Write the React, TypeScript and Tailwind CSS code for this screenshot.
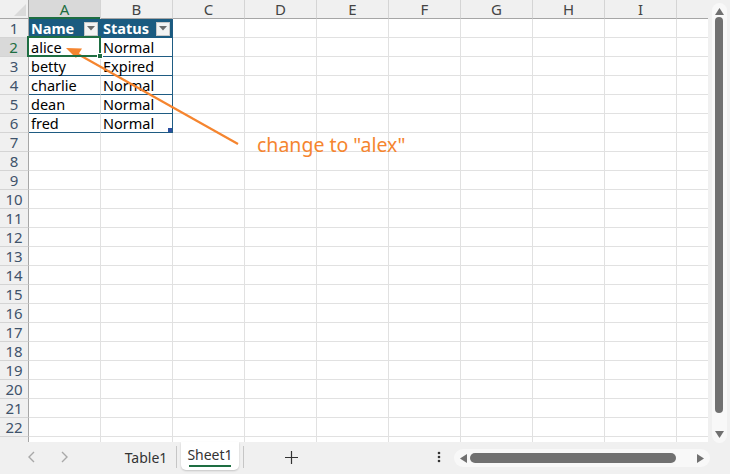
import React from "react";

const COLS = ["A", "B", "C", "D", "E", "F", "G", "H", "I", ""];
const DATA: Record<number, [string, string]> = {
  2: ["alice", "Normal"],
  3: ["betty", "Expired"],
  4: ["charlie", "Normal"],
  5: ["dean", "Normal"],
  6: ["fred", "Normal"],
};
const ROWS = Array.from({ length: 22 }, (_, i) => i + 1);

const FilterBtn = () => (
  <span className="ml-auto mr-[2px] flex h-[14px] w-[14px] items-center justify-center border border-[#c8c8c8] bg-[#f3f3f3]">
    <svg width="8" height="5" viewBox="0 0 8 5">
      <path d="M0 0 L8 0 L4 4.5 Z" fill="#6b6b6b" />
    </svg>
  </span>
);

const Cell = ({ row, col }: { row: number; col: number }) => {
  const isTableHead = row === 1 && col < 2;
  const inTable = row >= 2 && row <= 6 && col < 2;
  const val = DATA[row]?.[col];
  let cls = "relative flex h-[19px] items-center border-b border-r border-[#e1e1e1] bg-white pl-[2px] pt-[1px] text-[14.5px] text-black";
  if (isTableHead) {
    cls = "relative flex h-[19px] items-center border-b border-r border-[#1b5b80] bg-[#1b5b80] pl-[2px] pt-[1px] text-[14.5px] font-bold text-white";
  } else if (inTable) {
    cls =
      "relative flex h-[19px] items-center border-b border-r bg-white pl-[2px] pt-[1px] text-[14.5px] text-black " +
      (col === 1 ? "border-[#1f5c83]" : "border-b-[#1f5c83] border-r-[#e1e1e1]");
  }
  if (row === 1 && col === 1) cls += " border-r-[#1f5c83]";
  return (
    <div className={cls}>
      {isTableHead && (
        <>
          <span className="leading-none">{col === 0 ? "Name" : "Status"}</span>
          <FilterBtn />
        </>
      )}
      {val && <span className="leading-none">{val}</span>}
      {row === 6 && col === 1 && (
        <span className="absolute bottom-0 right-0 h-[4px] w-[4px] bg-[#2b4fa0]" />
      )}
      {row === 2 && col === 0 && (
        <>
          <span className="pointer-events-none absolute -left-[2px] -top-[2px] z-10 h-[21px] w-[74px] border-2 border-[#1e6e42]" />
          <span className="absolute -bottom-[3px] -right-[3px] z-20 h-[6px] w-[6px] border border-white bg-[#1e6e42]" />
        </>
      )}
    </div>
  );
};

export default function App() {
  return (
    <div
      className="relative h-[474px] w-[730px] overflow-hidden bg-[#f0f0f0]"
      style={{ fontFamily: '"Noto Sans", "Open Sans", sans-serif' }}
    >
      <div className="flex h-[442px]">
        {/* sheet grid */}
        <div className="h-[442px] w-[708px] overflow-hidden bg-white">
          <div className="grid grid-cols-[29px_repeat(9,72px)_40px]">
            {/* corner */}
            <div className="relative h-[19px] border-b border-r border-[#a6a6a6] bg-[#f0f0f0]">
              <svg className="absolute bottom-[2px] right-[2px]" width="12" height="12" viewBox="0 0 12 12">
                <path d="M12 0 L12 12 L0 12 Z" fill="#dadada" />
              </svg>
            </div>
            {COLS.map((c, i) => (
              <div
                key={c + i}
                className={
                  i === 0
                    ? "flex h-[19px] items-center justify-center border-r border-r-[#d4d4d4] bg-[#d9d9d9] text-[15px] leading-none text-[#1e6e42] shadow-[inset_0_-2px_0_#1e6e42]"
                    : "flex h-[19px] items-center justify-center border-b border-r border-b-[#a6a6a6] border-r-[#d4d4d4] bg-[#f0f0f0] text-[15px] leading-none text-[#444]"
                }
              >
                {c}
              </div>
            ))}
            {ROWS.map((r) => (
              <React.Fragment key={r}>
                <div
                  className={
                    r === 2
                      ? "flex h-[19px] items-center justify-center border-b border-r-2 border-b-[#d4d4d4] border-r-[#1e6e42] bg-[#d9d9d9] text-[15px] leading-none text-[#1e6e42]"
                      : "flex h-[19px] items-center justify-center border-b border-r border-b-[#d4d4d4] border-r-[#a6a6a6] bg-[#f0f0f0] text-[15px] leading-none text-[#3f536b]"
                  }
                >
                  {r}
                </div>
                {COLS.map((c, i) => (
                  <Cell key={c + i} row={r} col={i} />
                ))}
              </React.Fragment>
            ))}
            <div className="h-[6px] border-r border-[#a6a6a6] bg-[#f0f0f0]" />
            {COLS.map((c, i) => (
              <div key={"x" + i} className="h-[6px] border-r border-[#e1e1e1]" />
            ))}
          </div>
        </div>

        {/* vertical scrollbar */}
        <div className="flex w-[22px] justify-center pt-[3px]">
          <div className="flex h-[440px] w-[15px] flex-col items-center rounded-full bg-[#f8f8f8]">
            <svg className="mt-[5px]" width="9" height="7" viewBox="0 0 9 7">
              <path d="M4.5 0 L9 7 L0 7 Z" fill="#707070" />
            </svg>
            <div className="mt-[2px] h-[396px] w-[8px] rounded-full bg-[#707070]" />
            <svg className="mt-auto mb-[5px]" width="9" height="7" viewBox="0 0 9 7">
              <path d="M0 0 L9 0 L4.5 7 Z" fill="#707070" />
            </svg>
          </div>
        </div>
      </div>

      {/* bottom bar */}
      <div className="flex h-[32px] items-start text-[14px] text-[#333]">
        <div className="flex h-[30px] w-[110px] items-center gap-[22px] pl-[27px]">
          <svg width="10" height="14" viewBox="0 0 10 14">
            <path d="M7 2 L2 7 L7 12" fill="none" stroke="#a8a8a8" strokeWidth="1.4" />
          </svg>
          <svg width="10" height="14" viewBox="0 0 10 14">
            <path d="M3 2 L8 7 L3 12" fill="none" stroke="#a8a8a8" strokeWidth="1.4" />
          </svg>
        </div>
        <div className="flex h-[30px] w-[66px] items-center justify-center pl-[6px]">Table1</div>
        <div className="mt-[4px] h-[22px] w-px bg-[#c6c6c6]" />
        <div className="ml-[4px] flex h-[28px] w-[58px] flex-col items-center rounded-b-[5px] bg-white pt-[4px] shadow-[0_1px_2px_rgba(0,0,0,0.18)]">
          <span className="leading-[18px]">Sheet1</span>
          <span className="mt-[1px] h-[2px] w-[42px] bg-[#1e6e42]" />
        </div>
        <div className="ml-[4px] mt-[4px] h-[22px] w-px bg-[#c6c6c6]" />
        <div className="flex h-[30px] w-[94px] items-center justify-center">
          <svg width="13" height="13" viewBox="0 0 13 13">
            <path d="M6.5 0 V13 M0 6.5 H13" stroke="#333" strokeWidth="1.2" />
          </svg>
        </div>
        <div className="flex h-[30px] w-[115px] items-center justify-end pr-[12px]">
          <svg width="4" height="12" viewBox="0 0 4 12">
            <circle cx="2" cy="2" r="1.3" fill="#333" />
            <circle cx="2" cy="6" r="1.3" fill="#333" />
            <circle cx="2" cy="10" r="1.3" fill="#333" />
          </svg>
        </div>
        <div className="ml-[1px] mt-[7px] flex h-[18px] w-[256px] items-center rounded-full bg-[#f8f8f8] px-[6px]">
          <svg width="7" height="9" viewBox="0 0 7 9">
            <path d="M7 0 L7 9 L0 4.5 Z" fill="#707070" />
          </svg>
          <div className="ml-[3px] h-[10px] w-[206px] rounded-full bg-[#707070]" />
          <svg className="ml-auto" width="7" height="9" viewBox="0 0 7 9">
            <path d="M0 0 L7 4.5 L0 9 Z" fill="#707070" />
          </svg>
        </div>
      </div>

      {/* annotation */}
      <svg className="pointer-events-none absolute left-0 top-0" width="730" height="474">
        <line x1="238" y1="144" x2="76" y2="53" stroke="#f5852f" strokeWidth="2.2" />
        <path d="M66 48 L82 48.5 L76 58 Z" fill="#f5852f" />
      </svg>
      <div className="pointer-events-none absolute left-[257px] top-[131px] text-[19.5px] leading-[28px] text-[#f5852f]">
        change to "alex"
      </div>
    </div>
  );
}
